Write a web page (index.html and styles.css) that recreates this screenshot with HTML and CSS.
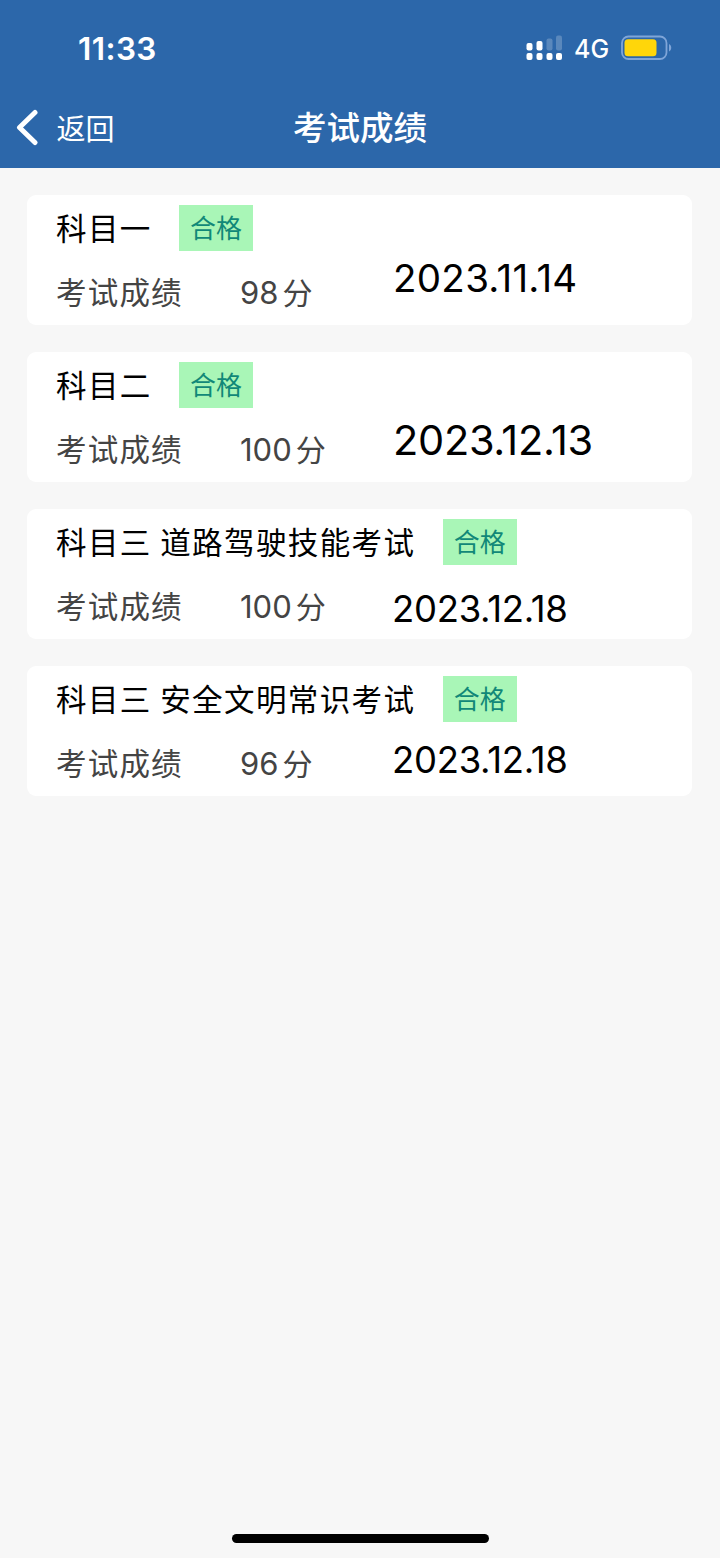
FILE: index.html
```html
<!DOCTYPE html>
<html lang="zh-CN">
<head>
    <meta charset="UTF-8">
    <meta name="viewport" content="width=device-width, initial-scale=1.0">
    <title>考试成绩</title>
    <link rel="stylesheet" href="styles.css">
</head>
<body>

    <!-- Header -->
    <header class="header">
        <div class="status-bar">
            <span class="time">11:33</span>
            <div class="status-icons">
                <svg class="signal" width="38" height="26" viewBox="0 0 38 26" fill="#fff">
                    <rect x="0.500" y="8" width="6" height="7.500" rx="2"/>
                    <rect x="10.500" y="6" width="6" height="9.500" rx="2"/>
                    <rect x="20.500" y="3.500" width="6" height="12" rx="2" opacity="0.22"/>
                    <rect x="30" y="0.500" width="6" height="15" rx="2" opacity="0.22"/>
                    <rect x="0.500" y="18" width="6" height="7" rx="2"/>
                    <rect x="10.500" y="18" width="6" height="7" rx="2"/>
                    <rect x="20.500" y="18" width="6" height="7" rx="2"/>
                    <rect x="30" y="18" width="6" height="7" rx="2"/>
                </svg>
                <span class="network">4G</span>
                <svg class="battery" width="52" height="26" viewBox="0 0 52 26">
                    <rect x="1" y="1.500" width="44.500" height="22.500" rx="6.500" fill="none" stroke="#7fa5d8" stroke-width="1.800"/>
                    <rect x="3.500" y="4.300" width="32" height="17" rx="3.500" fill="#ffd60a"/>
                    <path d="M48 9c3 1.500 3 6 0 7.500z" fill="#7fa5d8"/>
                </svg>
            </div>
        </div>
        <div class="nav">
            <a class="back">
                <svg width="24" height="38" viewBox="0 0 24 38" fill="none" stroke="#fff" stroke-width="5" stroke-linecap="round" stroke-linejoin="round">
                    <path d="M20 3.500 4.500 18.500l15.500 15"/>
                </svg>
                <span>返回</span>
            </a>
            <h1>考试成绩</h1>
        </div>
    </header>

    <!-- Results -->
    <main class="results">
        <section class="card">
            <div class="subject"><h2>科目一</h2><span class="badge">合格</span></div>
            <div class="score">
                <span class="label">考试成绩</span>
                <span class="mark">98<span class="unit">分</span></span>
                <span class="date date-1">2023.11.14</span>
            </div>
        </section>
        <section class="card">
            <div class="subject"><h2>科目二</h2><span class="badge">合格</span></div>
            <div class="score">
                <span class="label">考试成绩</span>
                <span class="mark">100<span class="unit">分</span></span>
                <span class="date date-2">2023.12.13</span>
            </div>
        </section>
        <section class="card">
            <div class="subject"><h2>科目三 道路驾驶技能考试</h2><span class="badge">合格</span></div>
            <div class="score">
                <span class="label">考试成绩</span>
                <span class="mark">100<span class="unit">分</span></span>
                <span class="date date-3">2023.12.18</span>
            </div>
        </section>
        <section class="card">
            <div class="subject"><h2>科目三 安全文明常识考试</h2><span class="badge">合格</span></div>
            <div class="score">
                <span class="label">考试成绩</span>
                <span class="mark">96<span class="unit">分</span></span>
                <span class="date date-4">2023.12.18</span>
            </div>
        </section>
    </main>

    <footer class="footer">
        <div class="home-bar"></div>
    </footer>

</body>
</html>
```
FILE: styles.css
```css
* {
    box-sizing: border-box;
}
body {
    display: flex;
    flex-direction: column;
    min-height: 1558px;
    margin: 0;
    background-color: #f7f7f7;
    font-family: Inter, "Noto Sans CJK SC", sans-serif;
    color: #000;
}
h1, h2 {
    margin: 0;
}
.header {
    height: 168px;
    background-color: #2c67aa;
    color: white;
}
.status-bar {
    display: flex;
    justify-content: space-between;
    height: 88px;
    padding: 8px 47px 0 78px;
}
.time {
    line-height: 81px;
    font-size: 31.5px;
    font-weight: 600;
    letter-spacing: 0.4px;
}
.status-icons {
    display: flex;
    align-items: center;
    height: 80px;
}
.network {
    width: 36px;
    margin: 2px 11px 0 10px;
    font-size: 25px;
    font-weight: 500;
}
.nav {
    display: grid;
    grid-template-columns: 1fr auto 1fr;
    align-items: center;
    height: 80px;
    padding: 0 15px;
}
.back {
    display: flex;
    align-items: center;
    gap: 17.5px;
    font-size: 29px;
}
.back span {
    padding-top: 3px;
    line-height: 36px;
}
.nav h1 {
    font-size: 33.5px;
    font-weight: 500;
    line-height: 78px;
}
.results {
    display: flex;
    flex-direction: column;
    flex: 1;
    gap: 27px;
    padding: 27px 28px 0 27px;
}
.card {
    height: 130px;
    padding: 10px 29px 0;
    background-color: white;
    border-radius: 9px;
}
.subject {
    display: flex;
    height: 46px;
    gap: 27.4px;
}
.subject h2 {
    font-size: 30.5px;
    font-weight: 400;
    letter-spacing: 1.4px;
    word-spacing: -1.5px;
    line-height: 48px;
    white-space: nowrap;
}
.badge {
    width: 74px;
    background-color: #a9f6b7;
    color: #118878;
    font-size: 26px;
    line-height: 47px;
    text-align: center;
}
.score {
    display: flex;
    height: 74px;
    color: #444;
    font-size: 30.5px;
    line-height: 84px;
}
.label {
    width: 184px;
    letter-spacing: 1.2px;
}
.mark {
    width: 153px;
    font-size: 31px;
}
.unit {
    margin-left: 4px;
    font-size: 30px;
}
.date {
    color: #000;
    line-height: 50px;
}
.date-1 {
    margin-top: 2px;
    font-size: 38.5px;
    letter-spacing: 0.3px;
}
.date-2 {
    margin-top: 7px;
    font-size: 41.5px;
    letter-spacing: -0.3px;
}
.date-3, .date-4 {
    margin-left: -1px;
    font-size: 36.5px;
    letter-spacing: -0.3px;
}
.date-3 {
    margin-top: 19px;
}
.date-4 {
    margin-top: 13px;
}
.footer {
    display: flex;
    justify-content: center;
    height: 24px;
}
.home-bar {
    width: 257px;
    height: 9px;
    border-radius: 5px;
    background-color: #000;
}
```
